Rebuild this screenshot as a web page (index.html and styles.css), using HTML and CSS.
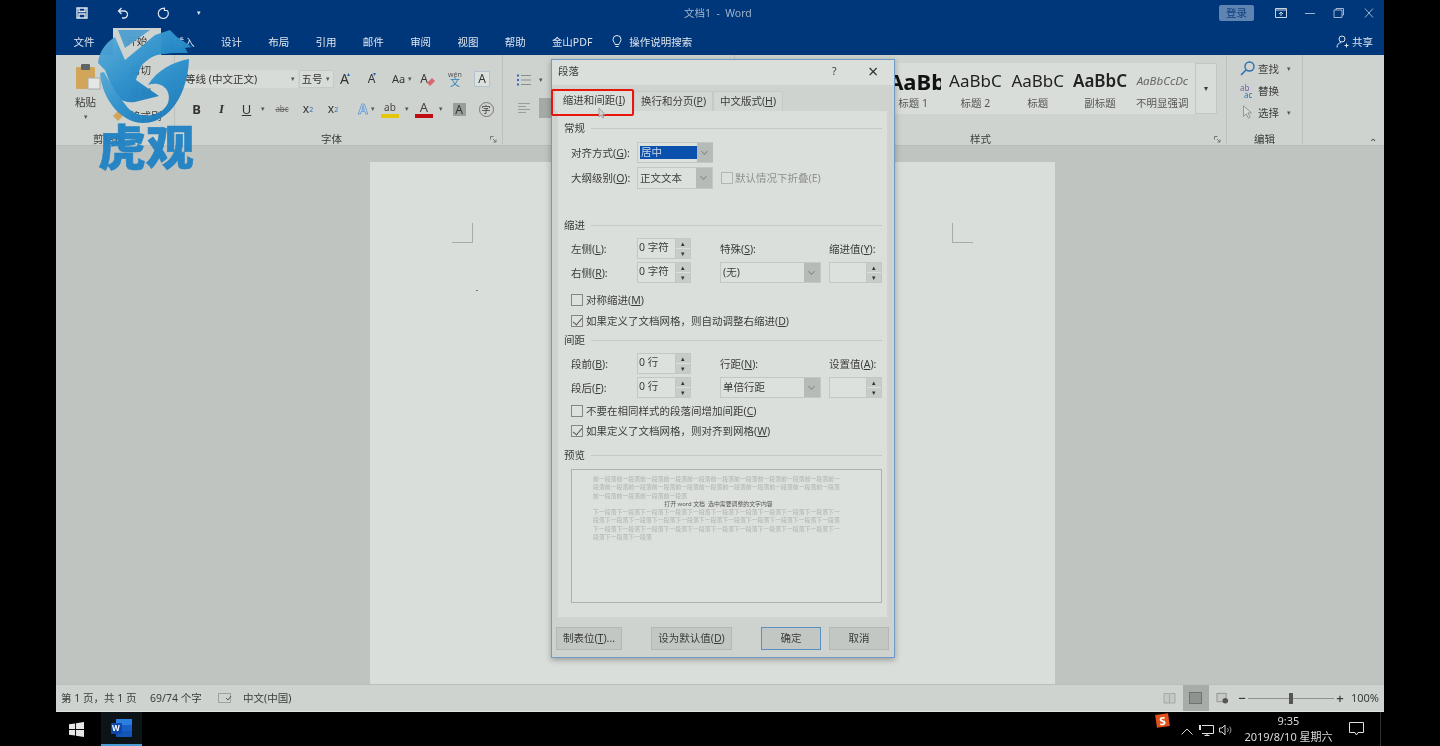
FILE: index.html
```html
<!DOCTYPE html>
<html lang="zh-CN">
<head>
<meta charset="utf-8">
<title>文档1 - Word</title>
<link rel="stylesheet" href="styles.css">
</head>
<body>
<div class="screen">
<main class="app">
  <header class="titlebar">
    <div class="qat">
      <svg class="qat-icon save" viewBox="0 0 12 12"><path d="M1 1h10v10H1z M3 1v3.5h6V1 M3 11V7h6v4" fill="none" stroke="#dfe6ef" stroke-width="1.4"/></svg>
      <svg class="qat-icon undo" viewBox="0 0 12 12"><path d="M4.5 1 1.5 4l3 3M1.5 4H7a3.4 3.4 0 0 1 0 7H5" fill="none" stroke="#dfe6ef" stroke-width="1.3"/></svg>
      <svg class="qat-icon redo" viewBox="0 0 12 12"><path d="M8 1.8A5 5 0 1 0 10.6 4M7.5 .5v3h3.300" fill="none" stroke="#dfe6ef" stroke-width="1.2"/></svg>
      <span class="qat-caret">▾</span>
      <span class="doc-title">文档1&nbsp; - &nbsp;Word</span>
      <span class="login">登录</span>
      <svg class="win-icon" viewBox="0 0 12 10"><path d="M.5.5h11v9H.5zM.5 2h11M6 8V4M4 6l2-2 2 2" fill="none" stroke="#cbd5e2"/></svg>
      <svg class="win-icon" viewBox="0 0 12 10"><path d="M1 5.500h10" stroke="#9fb3cc"/></svg>
      <svg class="win-icon" viewBox="0 0 12 10"><path d="M3 2V.5h7.500V7H9M1 2h8v7.500H1z" fill="none" stroke="#9fb3cc"/></svg>
      <svg class="win-icon" viewBox="0 0 12 10"><path d="M2 .5l8 9M10 .5l-8 9" stroke="#9fb3cc"/></svg>
    </div>
    <nav class="tabs">
      <span class="tab tab-file">文件</span>
      <span class="tab tab-active">开始</span>
      <span class="tab">插入</span>
      <span class="tab">设计</span>
      <span class="tab">布局</span>
      <span class="tab">引用</span>
      <span class="tab">邮件</span>
      <span class="tab">审阅</span>
      <span class="tab">视图</span>
      <span class="tab">帮助</span>
      <span class="tab tab-auto">金山PDF</span>
      <svg class="bulb" viewBox="0 0 10 13"><path d="M3 9.500C3 7.500 1 7 1 4.500a4 4 0 0 1 8 0C9 7 7 7.500 7 9.500zM3.500 11.500h3" fill="none" stroke="#dfe6ef"/></svg>
      <span class="tab-auto">操作说明搜索</span>
      <span class="share">
        <svg class="share-icon" viewBox="0 0 13 13"><circle cx="6" cy="4" r="3" fill="none" stroke="#dfe6ef"/><path d="M1 12.500C1 9 3 8 5 7.500M8.500 10.500h4M10.500 8.500v4" fill="none" stroke="#dfe6ef"/></svg>
        共享
      </span>
    </nav>
  </header>

  <section class="ribbon">
    <div class="group g-clip">
      <div class="group-body clip-body">
        <div class="paste">
          <svg class="paste-icon" viewBox="0 0 26 26"><rect x="1" y="3" width="19" height="22" rx="1" fill="#d1a65a"/><rect x="6" y="0" width="9" height="6" rx="1" fill="#5f6468"/><rect x="13" y="14" width="12" height="11" fill="#e4e7e4" stroke="#aaa"/></svg>
          <span class="paste-label">粘贴</span>
          <span class="mini-caret">▾</span>
        </div>
        <div class="clip-side">
          <span>剪切</span>
          <span>复制</span>
          <span class="brush"><svg class="brush-icon" viewBox="0 0 10 10"><path d="M0 5 5 0l5 5-5 5z" fill="#d1a65a"/></svg>格式刷</span>
        </div>
      </div>
      <div class="group-label">剪贴板</div>
    </div>

    <div class="group g-font">
      <div class="group-body">
        <div class="font-row-1">
          <span class="combo combo-font">等线 (中文正文)<i class="mini-caret combo-caret">▾</i></span>
          <span class="combo combo-size">五号<i class="mini-caret combo-caret">▾</i></span>
          <span class="glyph big">A<sup class="up">▴</sup></span>
          <span class="glyph">A<sup class="up">▾</sup></span>
          <span class="glyph small">Aa<i class="mini-caret">▾</i></span>
          <span class="glyph eraser">A<svg class="eraser-mark" viewBox="0 0 10 10"><path d="M1 7 6 2l3 3-5 5z" fill="#d9666e"/></svg></span>
          <span class="wen"><b>wén</b>文</span>
          <span class="boxed">A</span>
        </div>
        <div class="font-row-2">
          <span class="glyph strong">B</span>
          <span class="glyph em">I</span>
          <span class="glyph under">U</span>
          <span class="mini-caret">▾</span>
          <span class="glyph abc">abc</span>
          <span class="glyph">x<sub class="script blue">2</sub></span>
          <span class="glyph">x<sup class="script blue">2</sup></span>
          <span class="glyph outline end">A</span>
          <span class="mini-caret">▾</span>
          <span class="swatch yellow">ab</span>
          <span class="mini-caret">▾</span>
          <span class="swatch red">A</span>
          <span class="mini-caret">▾</span>
          <span class="shaded">A</span>
          <span class="circled">字</span>
        </div>
      </div>
      <div class="group-label">字体<svg class="launcher" viewBox="0 0 7 7"><path d="M.5.500h3M.5.500v3M3 3l3 3M6 3.500V6H3.500" fill="none" stroke="#777"/></svg></div>
    </div>

    <div class="group g-para">
      <div class="group-body para-body">
        <div class="para-row">
          <svg class="para-icon" viewBox="0 0 14 12"><path d="M4 1.500h10M4 6h10M4 10.500h10" stroke="#8b8f8b"/><path d="M0 .5h2v2H0zM0 5h2v2H0zM0 9.500h2v2H0z" fill="#2a6fb5"/></svg>
          <span class="mini-caret">▾</span>
        </div>
        <div class="para-row">
          <svg class="para-icon" viewBox="0 0 14 12"><path d="M1 1.500h12M1 4.500h8M1 7.500h12M1 10.500h8" stroke="#9a9e9a"/></svg>
          <span class="para-selected"></span>
        </div>
      </div>
      <div class="group-label">段落</div>
    </div>

    <div class="group g-styles">
      <div class="group-body styles-body">
        <div class="gallery">
          <div class="style-item"><span class="sample s-h1">AaBbC</span><span class="style-name">标题 1</span></div>
          <div class="style-item"><span class="sample">AaBbC</span><span class="style-name">标题 2</span></div>
          <div class="style-item"><span class="sample">AaBbC</span><span class="style-name">标题</span></div>
          <div class="style-item"><span class="sample s-bold">AaBbC</span><span class="style-name">副标题</span></div>
          <div class="style-item"><span class="sample s-subtle">AaBbCcDc</span><span class="style-name">不明显强调</span></div>
          <div class="gallery-more">▾</div>
        </div>
      </div>
      <div class="group-label">样式<svg class="launcher" viewBox="0 0 7 7"><path d="M.5.500h3M.5.500v3M3 3l3 3M6 3.500V6H3.500" fill="none" stroke="#777"/></svg></div>
    </div>

    <div class="group g-edit">
      <div class="group-body edit-body">
        <div class="edit-row"><svg class="edit-icon" viewBox="0 0 15 15"><circle cx="9.500" cy="5.500" r="4.500" fill="none" stroke="#2a6fb5" stroke-width="1.400"/><path d="M6 9l-5 5" stroke="#2a6fb5" stroke-width="1.600"/></svg>查找<i class="mini-caret edit-caret">▾</i></div>
        <div class="edit-row"><span class="ab-ac"><b>ab</b><em>ac</em></span>替换</div>
        <div class="edit-row"><svg class="edit-icon" viewBox="0 0 15 17"><path d="M3 1v12l3-3 2.500 5 2-1-2.500-5h4z" fill="#d9ddd9" stroke="#8b8f8b"/></svg>选择<i class="mini-caret edit-caret">▾</i></div>
      </div>
      <div class="group-label">编辑</div>
    </div>
    <div class="collapse">⌃</div>
  </section>

  <section class="doc-area">
    <article class="page">
      <span class="crop crop-left"></span>
      <span class="crop crop-right"></span>
      <span class="caret-mark"></span>
    </article>
  </section>

  <footer class="status">
    <span class="st st-page">第 1 页，共 1 页</span>
    <span class="st st-count">69/74 个字</span>
    <svg class="st-check" viewBox="0 0 14 12"><path d="M.5 1.500h12v9H.5z" fill="none" stroke="#9da19d"/><path d="M8 6l2 2 3-4" fill="none" stroke="#555"/></svg>
    <span class="st">中文(中国)</span>
    <span class="status-right">
      <svg class="view-icon" viewBox="0 0 13 12"><path d="M1 1.500h5l.5 1 .5-1h5v9.500H1zM6.500 2.500V11" fill="#c5c9c5" stroke="#a5a9a5"/></svg>
      <span class="view-selected"><i></i></span>
      <svg class="view-icon" viewBox="0 0 14 12"><path d="M1 1h10v9H1z" fill="#c5c9c5" stroke="#8f938f"/><circle cx="10" cy="9" r="3" fill="#555"/></svg>
      <span class="zoom-sign">−</span>
      <span class="slider"><i></i></span>
      <span class="zoom-sign">+</span>
      <span class="zoom-value">100%</span>
    </span>
  </footer>
</main>

<footer class="taskbar">
  <svg class="start" viewBox="0 0 16 16"><path d="M0 2.500 6.500 1.500v6H0zM7.500 1.300 16 0v7.500H7.500zM0 8.500h6.500v6L0 13.500zM7.500 8.500H16V16l-8.500-1.300z" fill="#e6e8e6"/></svg>
  <span class="word-btn">
    <svg class="word-icon" viewBox="0 0 21 18"><rect x="5" y="0" width="16" height="18" rx="1" fill="#1356b8"/><rect x="5" y="0" width="16" height="6" fill="#2b7de0"/><rect x="11" y="6" width="10" height="6" fill="#1a5ec8"/><rect x="0" y="4" width="11" height="11" rx="1" fill="#0d47a8"/></svg>
    <span class="word-w">W</span>
  </span>
  <span class="tray">
    <span class="sogou">S</span>
    <svg class="tray-icon" viewBox="0 0 12 7"><path d="M.5 6.500 6 1l5.500 5.500" fill="none" stroke="#d8d8d8"/></svg>
    <svg class="tray-net" viewBox="0 0 15 12"><path d="M3 1.500h11.500v8H3M8 9.500v2M5.500 11.500h5" fill="none" stroke="#e0e0e0"/><path d="M0 1h2v5H0z" fill="#e0e0e0"/></svg>
    <svg class="tray-vol" viewBox="0 0 14 12"><path d="M.5 4h2.500l3-3v10l-3-3H.5z" fill="none" stroke="#d8d8d8"/><path d="M8.500 4a3 3 0 0 1 0 4M10.500 2.500a5 5 0 0 1 0 7" fill="none" stroke="#9a9a9a"/></svg>
    <span class="clock"><span>9:35</span><span>2019/8/10 星期六</span></span>
    <svg class="notify" viewBox="0 0 15 14"><path d="M.5.500h14v10H9l-1.500 2.500L6 10.500H.5z" fill="none" stroke="#e0e0e0"/></svg>
    <span class="show-desktop"></span>
  </span>
</footer>
</div>

<div class="dialog">
  <div class="dlg-title"><span class="dlg-name">段落</span><span class="dlg-help">?</span><span class="dlg-close">×</span></div>
  <div class="dlg-tabs">
    <span class="dlg-tab dlg-tab-on">缩进和间距(<u>I</u>)</span>
    <span class="dlg-tab">换行和分页(<u>P</u>)</span>
    <span class="dlg-tab dlg-tab-3">中文版式(<u>H</u>)</span>
  </div>
  <div class="panel">
    <div class="section"><span>常规</span></div>
    <div class="form-row fr-1">
      <label>对齐方式(<u>G</u>):</label>
      <span class="select sel-a"><span class="sel-text"><span class="sel-hl">居中</span></span><i class="arrow"></i></span>
    </div>
    <div class="form-row fr-2">
      <label>大纲级别(<u>O</u>):</label>
      <span class="select sel-a"><span class="sel-text">正文文本</span><i class="arrow"></i></span>
      <span class="check-inline"><i class="box box-off"></i><span class="muted">默认情况下折叠(E)</span></span>
    </div>

    <div class="section s-indent"><span>缩进</span></div>
    <div class="grid-row gr-1">
      <label>左侧(<u>L</u>):</label>
      <span class="spin"><span class="spin-text">0 字符</span><span class="spin-btns"><i>▴</i><i>▾</i></span></span>
      <label>特殊(<u>S</u>):</label>
      <label>缩进值(<u>Y</u>):</label>
    </div>
    <div class="grid-row gr-2">
      <label>右侧(<u>R</u>):</label>
      <span class="spin"><span class="spin-text">0 字符</span><span class="spin-btns"><i>▴</i><i>▾</i></span></span>
      <span class="select"><span class="sel-text">(无)</span><i class="arrow"></i></span>
      <span class="spin"><span class="spin-text"></span><span class="spin-btns"><i>▴</i><i>▾</i></span></span>
    </div>
    <div class="check c-1"><i class="box"></i><span>对称缩进(<u>M</u>)</span></div>
    <div class="check c-2"><i class="box box-on"></i><span>如果定义了文档网格，则自动调整右缩进(<u>D</u>)</span></div>

    <div class="section s-space"><span>间距</span></div>
    <div class="grid-row gr-3">
      <label>段前(<u>B</u>):</label>
      <span class="spin"><span class="spin-text">0 行</span><span class="spin-btns"><i>▴</i><i>▾</i></span></span>
      <label>行距(<u>N</u>):</label>
      <label>设置值(<u>A</u>):</label>
    </div>
    <div class="grid-row gr-2">
      <label>段后(<u>F</u>):</label>
      <span class="spin"><span class="spin-text">0 行</span><span class="spin-btns"><i>▴</i><i>▾</i></span></span>
      <span class="select"><span class="sel-text">单倍行距</span><i class="arrow"></i></span>
      <span class="spin"><span class="spin-text"></span><span class="spin-btns"><i>▴</i><i>▾</i></span></span>
    </div>
    <div class="check c-3"><i class="box"></i><span>不要在相同样式的段落间增加间距(<u>C</u>)</span></div>
    <div class="check c-3"><i class="box box-on"></i><span>如果定义了文档网格，则对齐到网格(<u>W</u>)</span></div>

    <div class="section s-preview"><span>预览</span></div>
    <div class="preview">
      <p>前一段落前一段落前一段落前一段落前一段落前一段落前一段落前一段落前一段落前一段落前一</p>
      <p>段落前一段落前一段落前一段落前一段落前一段落前一段落前一段落前一段落前一段落前一段落</p>
      <p>前一段落前一段落前一段落前一段落</p>
      <p class="pv-main">打开 word 文档&nbsp; 选中需要调整的文字内容</p>
      <p>下一段落下一段落下一段落下一段落下一段落下一段落下一段落下一段落下一段落下一段落下一</p>
      <p>段落下一段落下一段落下一段落下一段落下一段落下一段落下一段落下一段落下一段落下一段落</p>
      <p>下一段落下一段落下一段落下一段落下一段落下一段落下一段落下一段落下一段落下一段落下一</p>
      <p>段落下一段落下一段落</p>
    </div>
  </div>
  <div class="dlg-foot">
    <span class="btn b-tab">制表位(<u>T</u>)...</span>
    <span class="btn b-def">设为默认值(<u>D</u>)</span>
    <span class="btn b-ok">确定</span>
    <span class="btn b-cancel">取消</span>
  </div>
</div>

<div class="highlight"></div>
<svg class="pointer" viewBox="0 0 8 12"><path d="M1 1v9l2-2 1.500 3 1.500-.7L4.500 7.500H7z" fill="#cfd3cf" stroke="#8f938f" stroke-width=".7"/></svg>

<div class="logo">
  <svg class="logo-mark" viewBox="0 0 100 100">
    <defs>
      <linearGradient id="lg" x1="0" y1="0" x2="1" y2="1">
        <stop offset="0" stop-color="#5fb0da"/>
        <stop offset=".5" stop-color="#2a8fcb"/>
        <stop offset="1" stop-color="#1673b5"/>
      </linearGradient>
    </defs>
    <path class="logo-crown" d="M22 2H54L29 20Z" fill="#4f9fd0"/>
    <path d="M2 35C3 25 8 16 19 9L29 32 59 7 74 2 81 9 96 19 89 20 92 25 81 25C72 25 61 27 61 27 52 30 46 37 46 37 43 42 40 52 40 52L63 68 39 74C32 75 26 73 22 70L14 55 9 42Z" fill="url(#lg)"/>
    <path d="M4 45C6 72 26 95 47 95 74 95 92 65 93 31 77 34 61 42 52 57 67 52 76 64 72 75 66 89 44 92 32 80L18 62 8 44Z" fill="url(#lg)"/>
  </svg>
  <span class="logo-text">虎观</span>
</div>
</body>
</html>
```

FILE: styles.css
```css
* { box-sizing: border-box; }
html, body { margin: 0; height: 746px; overflow: hidden; background: #000; }
body { font: 10.5px/14px "Noto Sans", "Noto Sans CJK SC", sans-serif; color: #3a3d3a; }
u { text-underline-offset: 1px; }
i { font-style: normal; }

.screen { width: 1440px; height: 746px; display: flex; flex-direction: column; filter: blur(.35px); }
.app { margin: 0 56px; height: 712px; display: flex; flex-direction: column; background: #c0c4c0; }

/* title bar */
.titlebar { height: 55px; background: #00367a; color: #dfe6ef; flex: none; }
.qat { height: 28px; display: flex; align-items: center; position: relative; padding-bottom: 2px; }
.qat-icon { width: 12px; height: 12px; flex: none; }
.save { margin-left: 20px; }
.undo { margin-left: 29px; }
.redo { margin-left: 28px; }
.qat-caret { margin-left: 28px; font-size: 7px; }
.doc-title { margin-left: 483px; width: 72px; color: #9fb3cc; white-space: nowrap; }
.login { margin-left: 463px; width: 35px; height: 16px; background: #5f84b2; color: #12407e; text-align: center; line-height: 16px; border-radius: 2px; }
.win-icon { width: 12px; height: 10px; margin-left: 23px; }
.win-icon:nth-of-type(4) { margin-left: 21px; }
.win-icon:nth-of-type(5) { margin-left: 17px; }
.win-icon:nth-of-type(6) { margin-left: 17px; }
.win-icon:nth-of-type(7) { margin-left: 18px; }

.tabs { height: 27px; display: flex; align-items: center; padding-left: 2px; }
.tab { width: 47.3px; text-align: center; flex: none; }
.tab-file { width: 52px; margin-right: 3px; }
.tab-active { width: 47.500px; height: 27px; line-height: 27px; background: #cfd3cf; color: #333; }
.tab-auto { width: auto; white-space: nowrap; }
.tabs .tab-auto:nth-of-type(11) { margin-left: 13px; }
.bulb { width: 10px; height: 13px; margin: 0 7px 0 20px; }
.share { margin-left: auto; margin-right: 11px; display: flex; align-items: center; gap: 3px; }
.share-icon { width: 13px; height: 13px; }

/* ribbon */
.ribbon { height: 91px; background: #cfd3cf; border-bottom: 1px solid #b9bdb9; display: flex; flex: none; position: relative; }
.group { display: flex; flex-direction: column; border-right: 1px solid #bdc1bd; height: 89px; flex: none; position: relative; }
.group-body { height: 78px; flex: none; }
.group-label { text-align: center; height: 12px; line-height: 12px; position: relative; color: #3a3d3a; }
.launcher { width: 7px; height: 7px; position: absolute; right: 5px; top: 3px; }
.mini-caret { font-size: 7px; color: #555; font-style: normal; text-align: center; }

.g-clip { width: 119px; }
.clip-body { display: flex; }
.paste { width: 60px; padding: 9px 0 0 19px; display: flex; flex-direction: column; align-items: flex-start; }
.paste-icon { width: 26px; height: 26px; }
.paste-label { margin-top: 5px; width: 22px; }
.paste .mini-caret { width: 22px; line-height: 10px; margin-top: 3px; }
.clip-side { display: flex; flex-direction: column; padding-top: 8px; gap: 9px; margin-left: 14px; }
.brush { white-space: nowrap; position: relative; }
.brush-icon { position: absolute; left: -17px; top: 2px; width: 10px; height: 10px; }
.g-clip .group-label { text-align: left; padding-left: 37px; }

.g-font { width: 328px; }
.g-font .group-label { padding-right: 14px; }
.font-row-1, .font-row-2 { display: grid; align-items: center; justify-items: center; }
.font-row-1 { margin-top: 15px; height: 18px; grid-template-columns: 123px 35px 24px 30px 30px 22px 32px 22px; column-gap: 0; }
.font-row-2 { margin-top: 11px; height: 20px; padding-left: 10px; grid-template-columns: 23px 27px 23px 10px 28px 24px 26px 22px 10px 24px 10px 24px 10px 26px 28px; }
.combo { display: flex; align-items: center; height: 18px; width: 100%; background: #d8dcd8; white-space: nowrap; color: #333; padding-left: 10px; }
.combo-size { margin-left: 1px; padding-left: 2px; border: 1px solid #c6cac6; }
.combo-caret { margin-left: auto; margin-right: 3px; }
.glyph { font-size: 12px; color: #333; white-space: nowrap; line-height: 16px; display: flex; align-items: center; position: relative; }
.glyph.big { font-size: 14px; }
.glyph.small { font-size: 11px; gap: 3px; }
.up { font-size: 6px; line-height: 6px; color: #2a6fb5; align-self: flex-start; margin-left: -2px; }
.eraser-mark { width: 10px; height: 10px; margin-left: -2px; margin-top: 4px; }
.wen { font-size: 10px; color: #2f7fb8; line-height: 9px; display: flex; flex-direction: column; align-items: center; }
.wen b { font-size: 7px; font-weight: 400; color: #555; line-height: 7px; }
.boxed { width: 16px; height: 16px; background: #dde1dd; border: 1px solid #b5c3d0; font-size: 12px; line-height: 14px; text-align: center; color: #333; }
.strong { font-weight: 700; font-size: 13px; }
.em { font-style: italic; font-family: "Liberation Serif", serif; font-weight: 700; font-size: 13px; }
.under { text-decoration: underline; font-size: 13px; }
.abc { font-size: 8px; text-decoration: line-through; color: #666; }
.script { font-size: 7px; line-height: 7px; }
.blue { color: #2a6fb5; }
.outline { color: #b9d0e8; font-weight: 700; font-size: 14px; -webkit-text-stroke: .5px #3f7fbf; justify-self: end; }
.swatch { width: 18px; height: 17px; font-size: 10px; line-height: 12px; text-align: center; color: #444; }
.swatch.yellow { border-bottom: 4px solid #e4c60e; }
.swatch.red { font-size: 13px; border-bottom: 4px solid #c00d12; }
.shaded { width: 13px; height: 13px; background: #9a9e9a; font-size: 12px; line-height: 13px; text-align: center; color: #333; }
.circled { width: 15px; height: 15px; border: 1px solid #777; border-radius: 50%; font-size: 9px; line-height: 13px; text-align: center; }

.g-para { width: 232px; }
.para-body { padding: 18px 0 0 14px; display: flex; flex-direction: column; gap: 14px; }
.para-row { display: flex; align-items: center; height: 14px; gap: 8px; }
.para-icon { width: 14px; height: 12px; }
.para-selected { width: 30px; height: 20px; background: #a6aaa6; }

.g-styles { width: 492px; }
.styles-body { padding-top: 8px; display: flex; justify-content: flex-end; padding-right: 9px; }
.gallery { display: flex; height: 51px; background: #d9ddd9; width: 335px; overflow: hidden; }
.style-item { width: 62.3px; flex: none; display: flex; flex-direction: column; align-items: center; }
.sample { height: 33px; line-height: 36px; font-size: 17px; color: #222; white-space: nowrap; width: 56px; overflow: hidden; text-align: center; }
.s-h1 { font-size: 22px; font-weight: 700; text-align: left; width: 53px; margin-left: 3px; color: #111; }
.s-bold { font-weight: 600; }
.s-subtle { font-size: 11.500px; font-style: italic; color: #666; }
.style-name { color: #555; line-height: 14px; white-space: nowrap; }
.gallery-more { width: 22px; margin-left: auto; border: 1px solid #c2c6c2; text-align: center; line-height: 48px; font-size: 8px; }

.g-edit { width: 76px; }
.edit-body { padding: 6px 0 0 13px; display: flex; flex-direction: column; gap: 7px; }
.edit-row { display: flex; align-items: center; height: 15px; gap: 3px; white-space: nowrap; }
.edit-icon { width: 15px; height: 15px; }
.edit-caret { margin-left: 5px; }
.ab-ac { width: 15px; line-height: 7px; font-size: 8px; display: flex; flex-direction: column; }
.ab-ac b { font-weight: 400; color: #7a5aa8; }
.ab-ac em { font-style: normal; color: #2a6fb5; margin-left: 4px; }
.collapse { margin-left: auto; margin-right: 7px; align-self: flex-end; font-size: 10px; height: 10px; line-height: 14px; color: #444; }

/* document */
.doc-area { flex: 1; min-height: 0; padding: 16px 15px 0 0; display: flex; justify-content: center; overflow: hidden; background: #c0c4c0; }
.page { width: 685px; height: 540px; background: #dadeda; position: relative; flex: none; }
.crop { position: absolute; top: 61px; width: 21px; height: 20px; border-bottom: 1px solid #a8aca8; }
.crop-left { left: 82px; border-right: 1px solid #a8aca8; }
.crop-right { left: 582px; border-left: 1px solid #a8aca8; }
.caret-mark { position: absolute; left: 106px; top: 128px; width: 2px; height: 1px; background: #777; }

/* status */
.status { height: 28px; flex: none; background: #cfd3cf; border-top: 1px solid #bcc0bc; border-bottom: 1px solid #e0e4e0; display: flex; align-items: center; padding-left: 5px; color: #3a3d3a; }
.st { white-space: nowrap; }
.st-page { width: 89px; }
.st-count { width: 68px; }
.st-check { width: 14px; height: 12px; margin-right: 11px; }
.status-right { margin-left: auto; height: 26px; display: flex; align-items: center; }
.view-icon { width: 13px; height: 12px; }
.view-selected { width: 26px; height: 26px; margin: 0 7px; background: #a8aca8; display: flex; align-items: center; justify-content: center; }
.view-selected i { width: 13px; height: 12px; background: #8f938f; border: 1px solid #6f736f; display: block; }
.zoom-sign { width: 10px; text-align: center; margin-left: 8px; font-size: 13px; font-weight: 600; }
.zoom-sign + .slider { margin-left: 1px; }
.slider + .zoom-sign { margin-left: 1px; }
.slider { width: 86px; height: 1px; background: #8f938f; position: relative; }
.slider i { position: absolute; left: 41px; top: -5px; width: 4px; height: 11px; background: #555; }
.zoom-value { margin: 0 5px 0 6px; font-size: 11px; }

/* taskbar */
.taskbar { height: 34px; flex: none; display: flex; align-items: center; background: #000; color: #dcdcdc; position: relative; }
.start { width: 15px; height: 15px; margin-left: 69px; flex: none; }
.word-btn { width: 41px; height: 34px; margin-left: 17px; background: #0c1418; border-bottom: 2px solid #4a9ad4; position: relative; display: flex; align-items: center; justify-content: center; }
.word-icon { width: 21px; height: 18px; }
.word-w { position: absolute; left: 11px; top: 10px; font-size: 8px; line-height: 11px; font-weight: 700; color: #fff; }
.tray { margin-left: auto; height: 34px; display: flex; align-items: center; position: relative; width: 284px; }
.sogou { position: absolute; left: 0; top: 2px; width: 13px; height: 13px; background: #e0521a; color: #fff; font-weight: 800; font-size: 11px; line-height: 13px; text-align: center; transform: rotate(-8deg); }
.tray-icon { width: 12px; height: 7px; margin-left: 25px; margin-top: 4px; }
.tray-net { width: 15px; height: 12px; margin-left: 6px; margin-top: 2px; }
.tray-vol { width: 14px; height: 12px; margin-left: 5px; margin-top: 2px; }
.clock { width: 87px; margin-left: 12px; display: flex; flex-direction: column; align-items: center; line-height: 16px; white-space: nowrap; font-size: 11px; }
.notify { width: 15px; height: 14px; margin-left: 17px; }
.show-desktop { position: absolute; right: 59px; top: 0; width: 1px; height: 34px; background: #333; }

/* dialog */
.dialog { position: absolute; left: 551px; top: 59px; width: 344px; height: 599px; background: #cfd3cf; border: 1px solid #6f9bc6; box-shadow: 0 2px 6px rgba(0,0,0,.3); display: flex; flex-direction: column; filter: blur(.35px); }
.dlg-title { height: 25px; flex: none; background: #dbdfdb; display: flex; align-items: center; padding: 0 0 3px 6px; }
.dlg-name { width: 274px; }
.dlg-help { width: 21px; }
.dlg-close { font-size: 18px; margin-left: 15px; line-height: 20px; color: #333; }
.dlg-tabs { height: 26px; flex: none; display: flex; align-items: flex-end; padding-left: 2px; }
.dlg-tab { height: 20px; line-height: 19px; width: 79px; text-align: center; background: #d3d7d3; border: 1px solid #c6cac6; border-bottom: 0; white-space: nowrap; }
.dlg-tab-on { width: 80px; height: 21px; background: #dbdfdb; }
.dlg-tab-3 { width: 70px; }
.panel { height: 507px; flex: none; margin: 0 6px 0 5px; background: #dbdfdb; padding: 10px 5px 0 6px; border: 1px solid #d0d4d0; border-width: 0 1px 1px; }
.section { height: 14px; display: flex; align-items: center; gap: 6px; }
.section::after { content: ""; flex: 1; height: 1px; background: #c6cac6; }
.s-indent { margin-top: 29px; }
.s-space { margin-top: 5px; }
.s-preview { margin-top: 10px; }

.form-row, .grid-row, .check { margin-left: 7px; }
.form-row { display: flex; align-items: center; }
.form-row label { width: 66px; white-space: nowrap; }
.fr-1 { height: 21px; margin-top: 7px; }
.fr-2 { height: 22px; margin-top: 4px; }
.sel-a { width: 76px; }
.grid-row { display: grid; grid-template-columns: 66px 54px 130px 61px; align-items: center; }
.grid-row label { white-space: nowrap; }
.grid-row > :nth-child(3) { margin-left: 29px; width: 101px; }
.grid-row > :nth-child(4) { margin-left: 8px; width: 53px; }
.gr-1 { height: 20px; margin-top: 6px; }
.gr-2 { height: 21px; margin-top: 4px; }
.gr-3 { height: 20px; margin-top: 6px; }

.select { display: flex; height: 100%; border: 1px solid #c4c8c4; background: #dde1dd; align-items: stretch; }
.sel-text { flex: 1; padding-left: 2px; line-height: 19px; white-space: nowrap; display: flex; align-items: center; }
.sel-hl { display: block; width: 57px; height: 13px; line-height: 13px; background: #0a50ad; color: #c9d5e6; padding-left: 1px; }
.arrow { width: 16px; background: #b7bbb7; position: relative; flex: none; }
.arrow::after { content: ""; position: absolute; left: 5px; top: 6px; width: 4px; height: 4px; border: solid #8a8e8a; border-width: 0 1px 1px 0; transform: rotate(45deg); }
.spin { display: flex; height: 100%; border: 1px solid #c4c8c4; background: #dde1dd; }
.spin-text { flex: 1; padding-left: 1px; line-height: 17px; white-space: nowrap; }
.spin-btns { width: 15px; display: flex; flex-direction: column; border-left: 1px solid #c4c8c4; }
.spin-btns i { flex: 1; display: block; background: #c8ccc8; font-size: 7px; line-height: 9px; text-align: center; color: #333; }
.spin-btns i + i { margin-top: 1px; }

.box { width: 12px; height: 12px; border: 1px solid #848784; background: #dde1dd; flex: none; display: block; position: relative; }
.box-off { border-color: #b2b6b2; }
.box-on::after { content: ""; position: absolute; left: 3px; top: 0; width: 4px; height: 8px; border: solid #555; border-width: 0 1px 1px 0; transform: rotate(40deg); }
.check-inline { display: flex; align-items: center; gap: 2px; margin-left: 8px; white-space: nowrap; }
.muted { color: #8d908d; }
.check { display: flex; align-items: center; height: 14px; gap: 3px; white-space: nowrap; }
.c-1 { margin-top: 10px; }
.c-2 { margin-top: 7px; }
.c-3 { margin-top: 6px; }

.preview { height: 134px; margin: 7px 0 0 7px; border: 1px solid #aeb2ae; background: #dde1dd; padding: 5px 0 0 21px; }
.preview p { margin: 0; width: 248px; font-size: 5.880px; line-height: 8.300px; color: #aeb2ae; white-space: nowrap; overflow: hidden; }
.preview .pv-main { color: #555; text-align: center; padding-left: 3px; }

.dlg-foot { display: flex; padding: 9px 0 0 4px; }
.btn { height: 23px; line-height: 21px; background: #c3c7c3; border: 1px solid #b4b8b4; text-align: center; white-space: nowrap; flex: none; }
.b-tab { width: 66px; }
.b-def { width: 81px; margin-left: 29px; }
.b-ok { width: 60px; margin-left: 29px; border-color: #5b8fc0; }
.b-cancel { width: 60px; margin-left: 8px; }

/* overlays */
.highlight { position: absolute; left: 551px; top: 89px; width: 83px; height: 27px; border: 2.500px solid #e8150c; border-radius: 2px; }
.pointer { position: absolute; left: 598px; top: 107px; width: 8px; height: 12px; }
.logo { position: absolute; left: 96px; top: 28px; width: 100px; display: flex; flex-direction: column; align-items: center; filter: blur(.4px); opacity: .96; }
.logo-mark { width: 100px; height: 100px; flex: none; }
.logo-text { font: 900 48px/46px "Noto Sans CJK SC", sans-serif; color: #2283c4; -webkit-text-stroke: .6px #2283c4; width: 100px; text-align: center; white-space: nowrap; margin-top: -7px; }
```
